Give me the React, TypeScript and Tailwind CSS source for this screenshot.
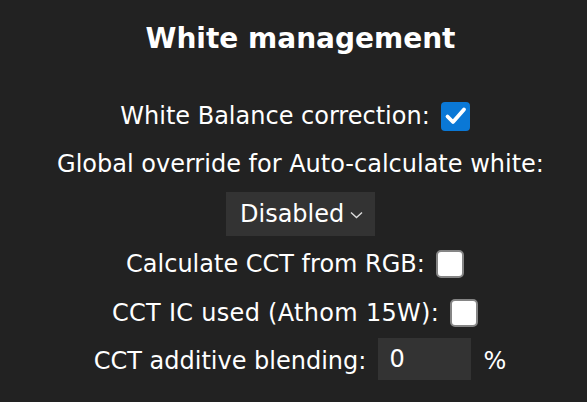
import React from "react";

const CheckBox = ({ checked }: { checked?: boolean }) =>
  checked ? (
    <span className="ml-[11px] mr-[11px] inline-flex h-[29px] w-[29px] items-center justify-center rounded-[4px] bg-[#0a78d6]">
      <svg width="29" height="29" viewBox="0 0 29 29">
        <polyline
          points="6.5,14.5 12,20 23,7.5"
          fill="none"
          stroke="#fff"
          strokeWidth="3.8"
          strokeLinecap="round"
          strokeLinejoin="round"
        />
      </svg>
    </span>
  ) : (
    <span className="ml-[11px] mr-[11px] inline-block h-[28px] w-[28px] rounded-[5px] border-2 border-[#858585] bg-white" />
  );

export default function App() {
  return (
    <div
      className="min-h-[402px] bg-[#222] pl-[14px] text-center text-[24px] text-white"
      style={{ fontFamily: '"DejaVu Sans", Verdana, sans-serif' }}
    >
      {/* Heading */}
      <div className="pt-[25px] pb-[39px] text-[28px] font-bold leading-[28px]">
        White management
      </div>

      <div className="flex flex-col leading-[48px]">
        <div className="flex h-[48px] items-center justify-center">
          <span>White Balance correction:</span>
          <CheckBox checked />
        </div>

        <div className="flex h-[48px] items-center justify-center">
          <span>Global override for Auto-calculate white:</span>
        </div>

        <div className="flex h-[52px] items-center justify-center">
          <div className="flex h-[44px] w-[149px] items-center bg-[#333] pl-[14px] leading-[44px]">
            <span>Disabled</span>
            <svg className="ml-[6px] mt-[2px]" width="13" height="8" viewBox="0 0 13 8">
              <polyline
                points="1,1.5 6.5,6.5 12,1.5"
                fill="none"
                stroke="#ddd"
                strokeWidth="1.4"
              />
            </svg>
          </div>
        </div>

        <div className="flex h-[48px] items-center justify-center">
          <span>Calculate CCT from RGB:</span>
          <CheckBox />
        </div>

        <div className="flex h-[49px] items-center justify-center">
          <span className="tracking-[0.3px]">CCT IC used (Athom 15W):</span>
          <CheckBox />
        </div>

        <div className="flex h-[48px] items-center justify-center">
          <span>CCT additive blending:</span>
          <div className="ml-[12px] mt-[1px] flex h-[42px] w-[93px] items-center self-start bg-[#333] pl-[11px] text-left leading-[42px]">
            0
          </div>
          <span className="ml-[12px] mr-[1px]">%</span>
        </div>

        <div className="mt-[7px] text-[24px] italic text-[#fa0]">
          WARNING: When using H-bridge for reverse polarity
          <br />
          (2-pin) CCT LED strip <b>make sure this is 0</b>.
        </div>
      </div>
    </div>
  );
}
